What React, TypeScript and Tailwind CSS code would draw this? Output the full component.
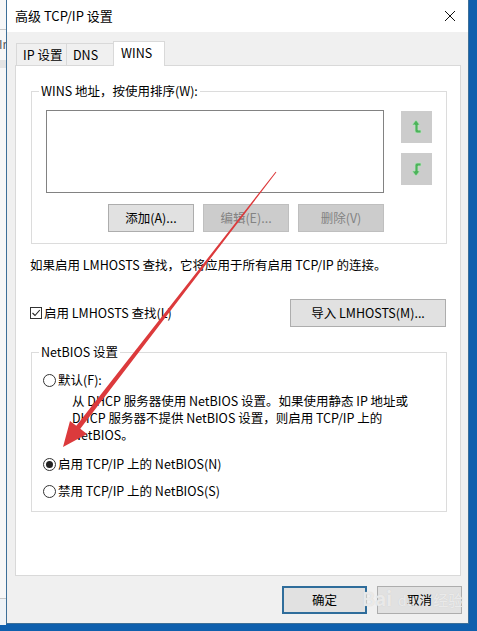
import React from "react"

// 高级 TCP/IP 设置 — WINS 选项卡

const font = "[font-family:'Noto_Sans_CJK_SC','Noto_Sans',sans-serif]"

function Btn({ label, disabled, focused, className = "" }: { label: string; disabled?: boolean; focused?: boolean; className?: string }) {
  const look = disabled
    ? "bg-[#cccccc] border-[#bfbfbf] text-[#838383]"
    : focused
      ? "bg-[#e1e1e1] border-[#2f6d9b] border-2 text-black"
      : "bg-[#e1e1e1] border-[#adadad] text-black"
  return (
    <div className={`flex items-center justify-center border h-[28px] text-[12.5px] ${look} ${className}`}>
      {label}
    </div>
  )
}

function Radio({ checked, label }: { checked?: boolean; label: string }) {
  return (
    <div className="flex items-center h-[18px] gap-[2px]">
      <span className="w-[13px] h-[13px] rounded-full border border-[#333] bg-white flex items-center justify-center">
        {checked && <span className="w-[7px] h-[7px] rounded-full bg-[#222]" />}
      </span>
      <span>{label}</span>
    </div>
  )
}

function MoveArrow({ down }: { down?: boolean }) {
  return (
    <svg width="12" height="16" viewBox="0 0 12 16" className={down ? "rotate-180 -scale-x-100" : ""}>
      <path
        d="M5 1 L1 6 H4 V12 Q4 14 6 14 H10 V11 H7 V6 H9 Z"
        fill="#4cb35a"
        stroke="#b9e2bf"
        strokeWidth="0.8"
      />
    </svg>
  )
}

export default function App() {
  return (
    <div className={`relative w-[477px] h-[631px] bg-[#0f5fad] overflow-hidden text-black ${font}`}>
      <div className="flex h-[625px]">
        {/* 背后窗口的一角 */}
        <div className="w-[6px] bg-[#f7f7f7] flex flex-col">
          <div className="h-[29px]" />
          <div className="h-px bg-[#c8c8c8]" />
          <div className="h-[30px] text-[12px] leading-[28px] -ml-[1px] text-[#555]">Ir</div>
          <div className="h-[8px] bg-[#e4e4e4]" />
          <div className="flex-1" />
          <div className="h-px bg-[#c8c8c8]" />
          <div className="h-[26px] bg-[#eef3f7]" />
        </div>

        {/* 对话框 */}
        <div className="w-[463px] h-[624px] border-x border-b border-[#3d6f98] bg-[#f0f0f0] flex flex-col">
          <div className="h-[32px] bg-white flex items-center justify-between pl-[8px] pr-[12px]">
            <span className="text-[13px]">高级 TCP/IP 设置</span>
            <svg width="12" height="12" viewBox="0 0 12 12">
              <path d="M1 1 L11 11 M11 1 L1 11" stroke="#111" strokeWidth="1" />
            </svg>
          </div>

          <div className="flex flex-col px-[8px] pt-[9px] text-[12.5px]">
            {/* 选项卡 */}
            <div className="flex items-end -mb-px ml-[1px] relative z-10">
              <div className="w-[51px] h-[23px] border border-[#d9d9d9] bg-[#f0f0f0] pl-[6px] leading-[21px]">IP 设置</div>
              <div className="w-[48px] h-[23px] -ml-px border border-[#d9d9d9] bg-[#f0f0f0] pl-[6px] leading-[21px]">DNS</div>
              <div className="w-[52px] h-[25px] -ml-px border border-b-0 border-[#d9d9d9] bg-white pl-[7px] leading-[22px]">WINS</div>
            </div>

            <div className="w-[446px] h-[511px] border border-[#d9d9d9] bg-white flex flex-col">
              {/* WINS 地址 */}
              <div className="mt-[25px] ml-[15px] w-[416px] border border-[#dcdcdc] flex flex-col pl-[14px] pb-[11px]">
                <span className="-mt-[10px] -ml-[7px] h-[18px] leading-[18px] bg-white w-fit px-[2px]">WINS 地址，按使用排序(W):</span>
                <div className="flex items-start mt-[10px]">
                  <div className="w-[338px] h-[83px] border border-[#828282] bg-white" />
                  <div className="ml-[17px] mt-[1px] flex flex-col gap-[10px]">
                    <div className="w-[31px] h-[32px] bg-[#cccccc] flex items-center justify-center"><MoveArrow /></div>
                    <div className="w-[31px] h-[32px] bg-[#cccccc] flex items-center justify-center"><MoveArrow down /></div>
                  </div>
                </div>
                <div className="flex mt-[11px] ml-[62px] gap-[9px]">
                  <Btn label="添加(A)..." className="w-[86px]" />
                  <Btn label="编辑(E)..." disabled className="w-[86px]" />
                  <Btn label="删除(V)" disabled className="w-[86px]" />
                </div>
              </div>

              <p className="mt-[12px] ml-[14px] h-[18px] leading-[18px]">
                如果启用 LMHOSTS 查找，它将应用于所有启用 TCP/IP 的连接。
              </p>

              <div className="mt-[25px] ml-[14px] w-[416px] flex items-center justify-between">
                <div className="flex items-center gap-[2px]">
                  <span className="w-[12px] h-[12px] border border-[#333] bg-white flex items-center justify-center">
                    <svg width="10" height="10" viewBox="0 0 10 10">
                      <path d="M1.5 5 L4 7.5 L8.8 2" stroke="#222" strokeWidth="1.1" fill="none" />
                    </svg>
                  </span>
                  <span>启用 LMHOSTS 查找(L)</span>
                </div>
                <Btn label="导入 LMHOSTS(M)..." className="w-[156px]" />
              </div>

              {/* NetBIOS 设置 */}
              <div className="mt-[25px] ml-[15px] w-[416px] border border-[#dcdcdc] flex flex-col pl-[11px] pb-[11px]">
                <span className="-mt-[10px] -ml-[4px] h-[18px] leading-[18px] bg-white w-fit px-[2px]">NetBIOS 设置</span>
                <div className="mt-[10px]"><Radio label="默认(F):" /></div>
                <div className="mt-[3px] ml-[29px] leading-[17px]">
                  <div>从 DHCP 服务器使用 NetBIOS 设置。如果使用静态 IP 地址或</div>
                  <div>DHCP 服务器不提供 NetBIOS 设置，则启用 TCP/IP 上的</div>
                  <div>NetBIOS。</div>
                </div>
                <div className="mt-[12px]"><Radio checked label="启用 TCP/IP 上的 NetBIOS(N)" /></div>
                <div className="mt-[9px]"><Radio label="禁用 TCP/IP 上的 NetBIOS(S)" /></div>
              </div>
            </div>

            <div className="flex justify-end gap-[10px] mt-[10px] -mr-[2px]">
              <Btn label="确定" focused className="w-[85px]" />
              <Btn label="取消" className="w-[85px]" />
            </div>
          </div>
        </div>
      </div>

      {/* 红色指示箭头 */}
      <svg className="absolute inset-0 pointer-events-none" width="477" height="631" viewBox="0 0 477 631">
        <polygon
          points="276.4,172.3 80.3,428.7 87,434 63,447 70,421 76.3,425.7 275.6,171.7"
          fill="#dc3a3c"
        />
      </svg>

      {/* 水印 */}
      <div className="absolute left-[362px] top-[588px] flex items-end text-white/60 leading-none pointer-events-none [text-shadow:0_0_1px_#c8c8c8]">
        <span className="text-[19px] font-bold">Bai</span>
        <span className="text-[14px] ml-[6px]">du</span>
        <span className="text-[15px] ml-[18px]">经验</span>
      </div>
    </div>
  )
}
